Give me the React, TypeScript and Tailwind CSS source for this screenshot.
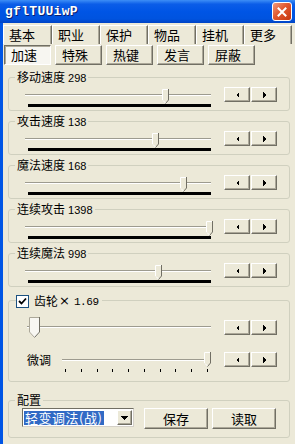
const cjk = "font-['Noto_Sans_CJK_SC','Noto_Sans',sans-serif]";

const raised =
  "border border-t-white border-l-white border-r-[#716f64] border-b-[#716f64] shadow-[inset_-1px_-1px_0_#aca899] bg-[#ece9d8]";

function Arrow({ dir }: { dir: "left" | "right" | "down" }) {
  if (dir === "down") {
    return (
      <svg width="7" height="4" viewBox="0 0 7 4" shapeRendering="crispEdges">
        <polygon points="0,0 7,0 3.5,4" fill="#000" />
      </svg>
    );
  }
  return (
    <svg width="3" height="6" viewBox="0 0 3 6" shapeRendering="crispEdges">
      {dir === "left" ? (
        <polygon points="3,0 0,3 3,6" fill="#000" />
      ) : (
        <polygon points="0,0 3,3 0,6" fill="#000" />
      )}
    </svg>
  );
}

function SpinButtons() {
  return (
    <div className="flex gap-[1px]">
      <button className={`${raised} w-[26px] h-[15px] flex items-center justify-center`}>
        <Arrow dir="left" />
      </button>
      <button className={`${raised} w-[26px] h-[15px] flex items-center justify-center`}>
        <Arrow dir="right" />
      </button>
    </div>
  );
}

function SmallThumb() {
  return (
    <svg width="7" height="15" viewBox="0 0 7 15">
      <polygon points="0,0 7,0 7,11 3.5,15 0,11" fill="#ece9d8" />
      <polyline points="0.5,11 0.5,0.5 6,0.5" fill="none" stroke="#fff" />
      <polyline points="6.5,0 6.5,11 3.5,14.5" fill="none" stroke="#716f64" />
      <line x1="1" y1="11.5" x2="3.5" y2="14" stroke="#fff" />
    </svg>
  );
}

function BigThumb() {
  return (
    <svg width="11" height="21" viewBox="0 0 11 21">
      <polygon points="0,0 11,0 11,15 5.5,21 0,15" fill="#f8f7f2" />
      <polyline points="0.5,15 0.5,0.5 10,0.5" fill="none" stroke="#aca899" />
      <polyline points="10.5,0 10.5,15 5.5,20.5" fill="none" stroke="#716f64" />
      <line x1="0.5" y1="15" x2="5.5" y2="20.5" stroke="#aca899" />
    </svg>
  );
}

function Track({ top }: { top: string }) {
  return (
    <div
      className={`absolute left-0 right-0 ${top} h-[2px] border-t border-t-[#9d9b8f] border-b border-b-white`}
    />
  );
}

function SpeedGroup({ label, value, pos, first }: { label: string; value: string; pos: number; first?: boolean }) {
  return (
    <div
      className={`relative h-[34px] border border-[#d0d0bf] rounded-[3px] flex ${first ? "mt-[12px]" : "mt-[10px]"}`}
    >
      <div className="absolute -top-[9px] left-[6px] bg-[#ece9d8] px-[2px] leading-[16px] text-[12px] text-black">
        {label}
        <span className="font-['Liberation_Sans',sans-serif] text-[11px]"> {value}</span>
      </div>
      <div className="ml-[16px] mt-[11px]">
        <div className="relative w-[186px] h-[15px]">
          <Track top="top-[5px]" />
          <div className="absolute top-0" style={{ left: pos }}>
            <SmallThumb />
          </div>
        </div>
        <div className="ml-[3px] w-[183px] h-[3px] bg-black" />
      </div>
      <div className="ml-[13px] mt-[9px]">
        <SpinButtons />
      </div>
    </div>
  );
}

export default function App() {
  const tabs = ["基本", "职业", "保护", "物品", "挂机", "更多"];
  const subTabs = ["加速", "特殊", "热键", "发言", "屏蔽"];
  const speeds = [
    { label: "移动速度", value: "298", pos: 137 },
    { label: "攻击速度", value: "138", pos: 127 },
    { label: "魔法速度", value: "168", pos: 155 },
    { label: "连续攻击", value: "1398", pos: 181 },
    { label: "连续魔法", value: "998", pos: 130 },
  ];

  return (
    <div className={`w-[295px] h-[444px] bg-[#ece9d8] overflow-hidden flex flex-col ${cjk} text-black`}>
      {/* title bar */}
      <div className="h-[23px] shrink-0 flex items-center bg-[linear-gradient(180deg,#3d8ef6_0%,#0b5de8_18%,#0055e5_50%,#0053df_82%,#0043c4_100%)]">
        <span className="ml-[5px] font-['Liberation_Mono',monospace] font-bold text-[13px] tracking-[0.3px] text-white [text-shadow:1px_1px_0_#0a1f6e]">
          gflTUUiwP
        </span>
        <div className="ml-auto mr-[3px] w-[20px] h-[19px] rounded-[3px] border border-white bg-[linear-gradient(135deg,#f09a7e_0%,#e2582f_45%,#c5360f_100%)] flex items-center justify-center">
          <svg width="10" height="10" viewBox="0 0 10 10">
            <path d="M1.5 1.5 L8.5 8.5 M8.5 1.5 L1.5 8.5" stroke="#fff" strokeWidth="2" strokeLinecap="square" />
          </svg>
        </div>
      </div>

      <div className="flex-1 border-l-[3px] border-l-[#0055e5] flex flex-col">
        {/* tab row 1 */}
        <div className="mt-[2px] flex h-[19px]">
          {tabs.map((t, i) => (
            <div
              key={t}
              className={`${i === 0 ? "w-[49px]" : "w-[48px]"} h-[19px] border-l border-t border-l-white border-t-white border-r border-r-[#716f64] shadow-[inset_-1px_0_0_#aca899] pl-[5px] text-[13px] leading-[18px]`}
            >
              {t}
            </div>
          ))}
        </div>

        {/* tab row 2 */}
        <div className="mt-[1px] ml-[1px] flex gap-[4px] h-[20px]">
          {subTabs.map((t, i) => (
            <div
              key={t}
              className={`w-[47px] h-[20px] pl-[6px] text-[13px] leading-[18px] ${
                i === 0
                  ? "border border-t-[#716f64] border-l-[#716f64] border-r-white border-b-white shadow-[inset_1px_1px_0_#aca899] bg-[#f7f6f1]"
                  : raised
              }`}
            >
              {t}
            </div>
          ))}
        </div>

        <div className="px-[5px] flex flex-col">
          {speeds.map((s, i) => (
            <SpeedGroup key={s.label} label={s.label} value={s.value} pos={s.pos} first={i === 0} />
          ))}

          {/* gear group */}
          <div className="relative mt-[13px] h-[82px] border border-[#d0d0bf] rounded-[3px] flex flex-col">
            <div className="absolute -top-[9px] left-[7px] bg-[#ece9d8] pr-[3px] flex items-center h-[18px]">
              <div className="w-[13px] h-[13px] border border-[#1c5180] bg-white flex items-center justify-center">
                <svg width="9" height="9" viewBox="0 0 9 9">
                  <path d="M1 4 L3.5 6.5 L8 1.5" fill="none" stroke="#000" strokeWidth="1.8" />
                </svg>
              </div>
              <span className="ml-[5px] text-[12px] leading-[16px]">齿轮</span>
              <span className="text-[13px] leading-[16px] font-['DejaVu_Sans',sans-serif] ml-[1px]">×</span>
              <span className="ml-[4px] mt-[3px] font-['Liberation_Mono',monospace] text-[11px] tracking-[-0.4px]">1.69</span>
            </div>

            <div className="flex items-start">
              <div className="ml-[18px] mt-[16px] relative w-[184px] h-[21px]">
                <Track top="top-[9px]" />
                <div className="absolute top-0 left-[2px]">
                  <BigThumb />
                </div>
              </div>
              <div className="ml-[13px] mt-[19px]">
                <SpinButtons />
              </div>
            </div>

            <div className="flex items-start mt-[14px]">
              <span className="ml-[18px] w-[24px] text-[12px] leading-[15px] h-[15px]">微调</span>
              <div className="ml-[11px]">
                <div className="relative w-[148px] h-[15px]">
                  <Track top="top-[7px]" />
                  <div className="absolute top-0 left-[142px]">
                    <SmallThumb />
                  </div>
                </div>
                <div className="ml-[3px] mt-[2px] w-[143px] h-[3px] flex justify-between">
                  {Array.from({ length: 10 }).map((_, k) => (
                    <div key={k} className="w-[1px] h-[3px] bg-black" />
                  ))}
                </div>
              </div>
              <div className="ml-[14px]">
                <SpinButtons />
              </div>
            </div>
          </div>

          {/* config group */}
          <div className="relative mt-[18px] h-[38px] border border-[#d0d0bf] rounded-[3px] flex items-start">
            <div className="absolute -top-[9px] left-[6px] bg-[#ece9d8] px-[2px] text-[12px] leading-[16px]">
              配置
            </div>
            <div className="ml-[13px] mt-[7px] w-[112px] h-[19px] border border-t-[#716f64] border-l-[#716f64] border-r-[#d4d0c8] border-b-[#d4d0c8] bg-white flex items-center">
              <span className="ml-[1px] bg-[#316ac5] text-white text-[13px] leading-[14px] h-[14px] pl-[1px] pr-[2px] tracking-[0.5px]">
                轻变调法(战)
              </span>
              <div className={`${raised} ml-auto mr-[1px] w-[15px] h-[15px] flex items-center justify-center`}>
                <Arrow dir="down" />
              </div>
            </div>
            <button
              className={`${raised} ml-[10px] mt-[7px] w-[64px] h-[21px] text-[13px] leading-[18px] flex items-center justify-center`}
            >
              保存
            </button>
            <button
              className={`${raised} ml-[4px] mt-[7px] w-[64px] h-[21px] text-[13px] leading-[18px] flex items-center justify-center`}
            >
              读取
            </button>
          </div>
        </div>
      </div>
    </div>
  );
}
